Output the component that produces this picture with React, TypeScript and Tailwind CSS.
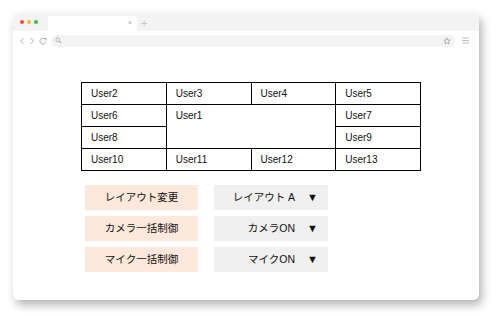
import React from 'react';

const font = { fontFamily: '"Liberation Sans", "Noto Sans CJK JP", sans-serif' };

const Cell: React.FC<{ label: string; rowSpan?: number; colSpan?: number }> = ({
  label,
  rowSpan,
  colSpan,
}) => (
  <td
    rowSpan={rowSpan}
    colSpan={colSpan}
    className="border border-black h-[22px] pl-[9px] text-[10px] text-[#111] align-top pt-[5px] leading-[12px]"
  >
    {label}
  </td>
);

const ActionButton: React.FC<{ label: string }> = ({ label }) => (
  <button className="w-[113px] h-[25px] bg-[#fce9dc] text-[10.5px] text-[#111] flex items-center justify-center">
    {label}
  </button>
);

const SelectBox: React.FC<{ value: string }> = ({ value }) => (
  <div className="w-[114px] h-[25px] bg-[#f0f0f0] text-[10.5px] text-[#111] flex items-center justify-end pr-[10px] gap-[12px]">
    <span>{value}</span>
    <span className="text-[11px]">▼</span>
  </div>
);

export default function App() {
  return (
    <div className="w-[500px] h-[320px] bg-white pt-[13px] pl-[13px]" style={font}>
      <div className="w-[466px] h-[287px] rounded-[6px] bg-white overflow-hidden shadow-[3px_5px_10px_rgba(0,0,0,0.3)]">
        {/* tab bar */}
        <div className="h-[18px] bg-[#f3f3f3] flex items-end">
          <div className="flex gap-[3px] pl-[7px] self-center">
            <span className="w-[4px] h-[4px] rounded-full bg-[#f44b41]" />
            <span className="w-[4px] h-[4px] rounded-full bg-[#f7b52b]" />
            <span className="w-[4px] h-[4px] rounded-full bg-[#2bc840]" />
          </div>
          <div className="ml-[10px] w-[89px] h-[15px] bg-white rounded-t-[3px] flex items-center justify-end pr-[5px] text-[7px] text-[#aaa]">
            ×
          </div>
          <span className="ml-[4px] text-[11px] leading-[15px] text-[#c4c4c4]">+</span>
        </div>
        {/* address bar */}
        <div className="h-[19px] bg-white flex items-center">
          <div className="flex items-center gap-[4px] pl-[6px] text-[#a8a8a8]">
            <svg width="6" height="8" viewBox="0 0 6 8"><path d="M4.5 1 L1.5 4 L4.5 7" fill="none" stroke="#aaa" strokeWidth="1" /></svg>
            <svg width="6" height="8" viewBox="0 0 6 8"><path d="M1.5 1 L4.5 4 L1.5 7" fill="none" stroke="#aaa" strokeWidth="1" /></svg>
            <svg width="8" height="8" viewBox="0 0 8 8"><path d="M6.5 2.5 A3 3 0 1 0 7 4.5" fill="none" stroke="#aaa" strokeWidth="1" /><path d="M5 1.5 L7 1.5 L7 3.5" fill="none" stroke="#aaa" strokeWidth="1" /></svg>
          </div>
          <div className="ml-[4px] w-[404px] h-[12px] bg-[#f3f3f3] rounded-full flex items-center px-[4px]">
            <svg width="7" height="7" viewBox="0 0 8 8"><circle cx="3.2" cy="3.2" r="2.2" fill="none" stroke="#aaa" strokeWidth="1" /><path d="M5 5 L7 7" stroke="#aaa" strokeWidth="1.2" /></svg>
            <svg className="ml-auto" width="8" height="8" viewBox="0 0 10 10"><path d="M5 1 L6.2 3.8 L9 4 L6.8 5.8 L7.5 8.8 L5 7.2 L2.5 8.8 L3.2 5.8 L1 4 L3.8 3.8 Z" fill="none" stroke="#999" strokeWidth="0.9" /></svg>
          </div>
          <svg className="ml-[7px]" width="7" height="7" viewBox="0 0 7 7"><path d="M0 1 H7 M0 3.5 H7 M0 6 H7" stroke="#bbb" strokeWidth="1" /></svg>
        </div>
        {/* content */}
        <div className="pl-[68px] pt-[32px]">
          <table className="border-collapse w-[340px] table-fixed">
            <tbody>
              <tr>
                <Cell label="User2" />
                <Cell label="User3" />
                <Cell label="User4" />
                <Cell label="User5" />
              </tr>
              <tr>
                <Cell label="User6" />
                <Cell label="User1" rowSpan={2} colSpan={2} />
                <Cell label="User7" />
              </tr>
              <tr>
                <Cell label="User8" />
                <Cell label="User9" />
              </tr>
              <tr>
                <Cell label="User10" />
                <Cell label="User11" />
                <Cell label="User12" />
                <Cell label="User13" />
              </tr>
            </tbody>
          </table>
          <div className="mt-[14px] ml-[4px] flex flex-col gap-[6px]">
            <div className="flex gap-[16px]">
              <ActionButton label="レイアウト変更" />
              <SelectBox value="レイアウト A" />
            </div>
            <div className="flex gap-[16px]">
              <ActionButton label="カメラ一括制御" />
              <SelectBox value="カメラON" />
            </div>
            <div className="flex gap-[16px]">
              <ActionButton label="マイク一括制御" />
              <SelectBox value="マイクON" />
            </div>
          </div>
        </div>
      </div>
    </div>
  );
}
